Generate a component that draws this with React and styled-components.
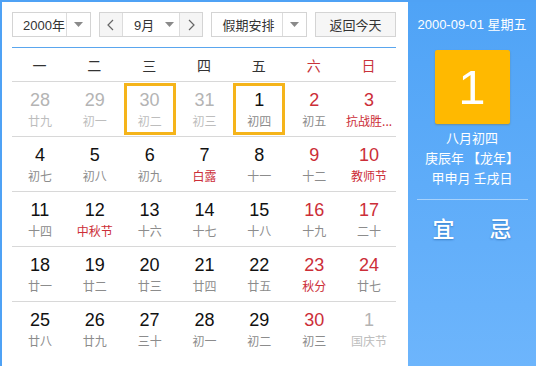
import styled, { createGlobalStyle } from "styled-components";

const GlobalStyle = createGlobalStyle`
  html, body {
    margin: 0;
    padding: 0;
    background: #ffffff;
  }
  body {
    font-family: "Liberation Sans", "Noto Sans CJK SC", sans-serif;
  }
`;

const weekdays = [
  { label: "一" },
  { label: "二" },
  { label: "三" },
  { label: "四" },
  { label: "五" },
  { label: "六", weekend: true },
  { label: "日", weekend: true },
];

// muted = other month, red = weekend/holiday number, fest = festival name
const weeks = [
  [
    { d: "28", l: "廿九", muted: true },
    { d: "29", l: "初一", muted: true },
    { d: "30", l: "初二", muted: true, mark: true },
    { d: "31", l: "初三", muted: true },
    { d: "1", l: "初四", mark: true },
    { d: "2", l: "初五", red: true },
    { d: "3", l: "抗战胜...", red: true, fest: true },
  ],
  [
    { d: "4", l: "初七" },
    { d: "5", l: "初八" },
    { d: "6", l: "初九" },
    { d: "7", l: "白露", fest: true },
    { d: "8", l: "十一" },
    { d: "9", l: "十二", red: true },
    { d: "10", l: "教师节", red: true, fest: true },
  ],
  [
    { d: "11", l: "十四" },
    { d: "12", l: "中秋节", fest: true },
    { d: "13", l: "十六" },
    { d: "14", l: "十七" },
    { d: "15", l: "十八" },
    { d: "16", l: "十九", red: true },
    { d: "17", l: "二十", red: true },
  ],
  [
    { d: "18", l: "廿一" },
    { d: "19", l: "廿二" },
    { d: "20", l: "廿三" },
    { d: "21", l: "廿四" },
    { d: "22", l: "廿五" },
    { d: "23", l: "秋分", red: true, fest: true },
    { d: "24", l: "廿七", red: true },
  ],
  [
    { d: "25", l: "廿八" },
    { d: "26", l: "廿九" },
    { d: "27", l: "三十" },
    { d: "28", l: "初一" },
    { d: "29", l: "初二" },
    { d: "30", l: "初三", red: true },
    { d: "1", l: "国庆节", muted: true },
  ],
];

function Triangle() {
  return (
    <svg width="9" height="5" viewBox="0 0 9 5">
      <path d="M0 0 L9 0 L4.5 5 Z" fill="#8a8a8a" />
    </svg>
  );
}

function Chevron({ dir }) {
  return (
    <svg width="7" height="12" viewBox="0 0 7 12">
      <path
        d={dir === "left" ? "M6 1 L1 6 L6 11" : "M1 1 L6 6 L1 11"}
        fill="none"
        stroke="#666"
        strokeWidth="1.2"
      />
    </svg>
  );
}

export default function App() {
  return (
    <>
      <GlobalStyle />
      <Frame>
        <Main>
          <Toolbar>
            <Select $w={79}>
              <SelectText>2000年</SelectText>
              <CaretBox $divider>
                <Triangle />
              </CaretBox>
            </Select>
            <Select $w={105}>
              <ArrowBtn>
                <Chevron dir="left" />
              </ArrowBtn>
              <SelectText $center>9月</SelectText>
              <CaretBox>
                <Triangle />
              </CaretBox>
              <ArrowBtn $right>
                <Chevron dir="right" />
              </ArrowBtn>
            </Select>
            <Select $w={96}>
              <SelectText>假期安排</SelectText>
              <CaretBox $divider>
                <Triangle />
              </CaretBox>
            </Select>
            <TodayButton>返回今天</TodayButton>
          </Toolbar>

          <Grid>
            {weekdays.map((w) => (
              <HeadCell key={w.label} $weekend={w.weekend}>
                {w.label}
              </HeadCell>
            ))}
            {weeks.flat().map((c, i) => (
              <DayCell key={i}>
                <DayBox $mark={c.mark}>
                  <DayNum $muted={c.muted} $red={c.red}>
                    {c.d}
                  </DayNum>
                  <Lunar $muted={c.muted} $fest={c.fest}>
                    {c.l}
                  </Lunar>
                </DayBox>
              </DayCell>
            ))}
          </Grid>
        </Main>

        <Side>
          <SideDate>2000-09-01 星期五</SideDate>
          <BigDay>1</BigDay>
          <SideInfo>
            <div>八月初四</div>
            <div>庚辰年 【龙年】</div>
            <div>甲申月 壬戌日</div>
          </SideInfo>
          <SideRule />
          <YiJi>
            <span>宜</span>
            <span>忌</span>
          </YiJi>
        </Side>
      </Frame>
    </>
  );
}

const Frame = styled.div`
  display: flex;
  width: 536px;
  height: 366px;
  box-sizing: border-box;
  border-top: 2px solid #4fa2f5;
  border-left: 2px solid #4fa2f5;
  overflow: hidden;
`;

const Main = styled.div`
  width: 406px;
  flex: none;
  box-sizing: border-box;
  padding: 10px 12px 0 10px;
  background: #fff;
`;

const Toolbar = styled.div`
  display: flex;
  align-items: center;
  gap: 8px;
  height: 25px;
  padding-bottom: 10px;
  border-bottom: 1px solid #5aa6ee;
  font-family: "Noto Sans CJK SC", sans-serif;
  font-size: 13px;
  color: #333;
`;

const Select = styled.div`
  display: flex;
  align-items: stretch;
  width: ${(p) => p.$w}px;
  height: 25px;
  box-sizing: border-box;
  border: 1px solid #d4d4d4;
  background: #fff;
`;

const SelectText = styled.div`
  flex: 1;
  display: flex;
  align-items: center;
  justify-content: ${(p) => (p.$center ? "center" : "flex-start")};
  padding-left: ${(p) => (p.$center ? "6px" : "10px")};
  font-family: "Liberation Sans", "Noto Sans CJK SC", sans-serif;
  font-size: 13px;
  color: #333;
`;

const CaretBox = styled.div`
  width: ${(p) => (p.$divider ? "23px" : "20px")};
  display: flex;
  align-items: center;
  justify-content: center;
  border-left: ${(p) => (p.$divider ? "1px solid #dcdcdc" : "none")};
`;

const ArrowBtn = styled.div`
  width: 22px;
  display: flex;
  align-items: center;
  justify-content: center;
  background: #f5f5f5;
  border-${(p) => (p.$right ? "left" : "right")}: 1px solid #dcdcdc;
`;

const TodayButton = styled.div`
  margin-left: auto;
  width: 81px;
  height: 25px;
  box-sizing: border-box;
  display: flex;
  align-items: center;
  justify-content: center;
  border: 1px solid #d4d4d4;
  background: #f6f6f6;
  font-size: 13px;
  color: #333;
`;

const Grid = styled.div`
  display: grid;
  grid-template-columns: repeat(7, 1fr);
  grid-template-rows: 34px repeat(5, 55px);
`;

const HeadCell = styled.div`
  display: flex;
  align-items: center;
  justify-content: center;
  box-sizing: border-box;
  border-bottom: 1px solid #d8d8d8;
  font-family: "Noto Sans CJK SC", sans-serif;
  font-size: 14px;
  color: ${(p) => (p.$weekend ? "#c8323a" : "#333")};
`;

const DayCell = styled.div`
  border-bottom: 1px solid #d8d8d8;
  box-sizing: border-box;
  padding: 1px 1px 1px 2px;
  display: flex;

  &:nth-last-child(-n + 7) {
    border-bottom: none;
  }
`;

const DayBox = styled.div`
  flex: 1;
  box-sizing: border-box;
  display: flex;
  flex-direction: column;
  align-items: center;
  padding-top: ${(p) => (p.$mark ? "3px" : "6px")};
  border: ${(p) => (p.$mark ? "3px solid #f5b41a" : "none")};
`;

const DayNum = styled.div`
  font-family: "Liberation Sans", sans-serif;
  font-size: 18px;
  line-height: 22px;
  color: ${(p) => (p.$muted ? "#b4b4b4" : p.$red ? "#cc2e38" : "#111")};
`;

const Lunar = styled.div`
  margin-top: 1px;
  font-family: "Noto Sans CJK SC", sans-serif;
  font-size: 12px;
  line-height: 18px;
  white-space: nowrap;
  color: ${(p) => (p.$muted ? "#bdbdbd" : p.$fest ? "#cc2e38" : "#8c8c8c")};
`;

const Side = styled.div`
  flex: 1;
  display: flex;
  flex-direction: column;
  align-items: center;
  background: linear-gradient(#4fa3f6, #6db5fc);
  color: #fff;
  font-family: "Noto Sans CJK SC", sans-serif;
`;

const SideDate = styled.div`
  margin-top: 13px;
  font-family: "Liberation Sans", "Noto Sans CJK SC", sans-serif;
  font-size: 13px;
  line-height: 20px;
`;

const BigDay = styled.div`
  margin-top: 15px;
  width: 75px;
  height: 74px;
  border-radius: 2px;
  background: #ffb900;
  box-shadow: 0 1px 2px rgba(120, 90, 0, 0.35);
  display: flex;
  align-items: center;
  justify-content: center;
  font-family: "Liberation Sans", sans-serif;
  font-size: 49px;
  color: #fff;
`;

const SideInfo = styled.div`
  margin-top: 4px;
  text-align: center;
  font-size: 13px;
  line-height: 20px;
`;

const SideRule = styled.div`
  align-self: stretch;
  margin: 11px 8px 0 9px;
  height: 1px;
  background: rgba(255, 255, 255, 0.45);
`;

const YiJi = styled.div`
  margin-top: 12px;
  display: flex;
  gap: 35px;
  font-size: 22px;
  font-weight: 500;
  line-height: 30px;
  text-shadow: 0 1px 2px rgba(0, 60, 130, 0.4);
`;
